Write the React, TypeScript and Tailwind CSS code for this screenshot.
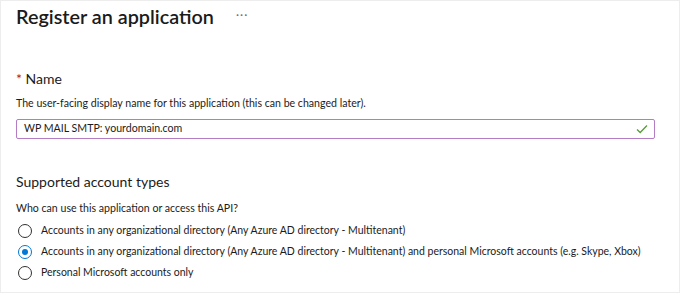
import React from "react";

const OPTIONS = [
  "Accounts in any organizational directory (Any Azure AD directory - Multitenant)",
  "Accounts in any organizational directory (Any Azure AD directory - Multitenant) and personal Microsoft accounts (e.g. Skype, Xbox)",
  "Personal Microsoft accounts only",
];

const App: React.FC = () => {
  return (
    <div
      className="w-[680px] h-[293px] bg-white border border-[#ededed] text-[#1b1b1b] overflow-hidden"
      style={{ fontFamily: "Lato, sans-serif" }}
    >
      <div className="pl-[15px] pr-[25px]">
        {/* titre */}
        <div className="h-[32px] flex items-center gap-[22px]">
          <h1 className="text-[19.8px] font-semibold leading-none">Register an application</h1>
          <span className="text-[12px] text-[#707070] tracking-[1px] -mt-[4px]">···</span>
        </div>

        {/* nom */}
        <div className="mt-[37px] text-[14px] leading-[18px]">
          <span className="text-[#a4262c]">*</span> Name
        </div>
        <p className="mt-[8px] text-[10.6px] leading-[15px]">
          The user-facing display name for this application (this can be changed later).
        </p>
        <div className="mt-[8px] h-[20px] w-[639px] border border-[#b47dc3] rounded-[2px] flex items-center justify-between pl-[7px] pr-[6px]">
          <span className="text-[10.6px]">WP MAIL SMTP: yourdomain.com</span>
          <svg width="12" height="10" viewBox="0 0 12 10" fill="none">
            <path d="M1 5.5 L4.2 8.5 L11 1.5" stroke="#5a9a3c" strokeWidth="1.3" />
          </svg>
        </div>

        {/* types de comptes */}
        <div className="mt-[34px] text-[14px] leading-[18px]">Supported account types</div>
        <p className="mt-[10px] text-[10.6px] leading-[15px]">
          Who can use this application or access this API?
        </p>
        <div className="mt-[4px] flex flex-col">
          {OPTIONS.map((label, i) => (
            <div key={i} className="h-[21px] flex items-center gap-[9px] pl-[2px]">
              <span
                className={`w-[14px] h-[14px] shrink-0 rounded-full border flex items-center justify-center ${
                  i === 1 ? "border-[#0078d4]" : "border-[#323130]"
                }`}
              >
                {i === 1 && <span className="w-[6px] h-[6px] rounded-full bg-[#0078d4]" />}
              </span>
              <span className="text-[10.5px] whitespace-nowrap">{label}</span>
            </div>
          ))}
        </div>
      </div>
    </div>
  );
};

export default App;
